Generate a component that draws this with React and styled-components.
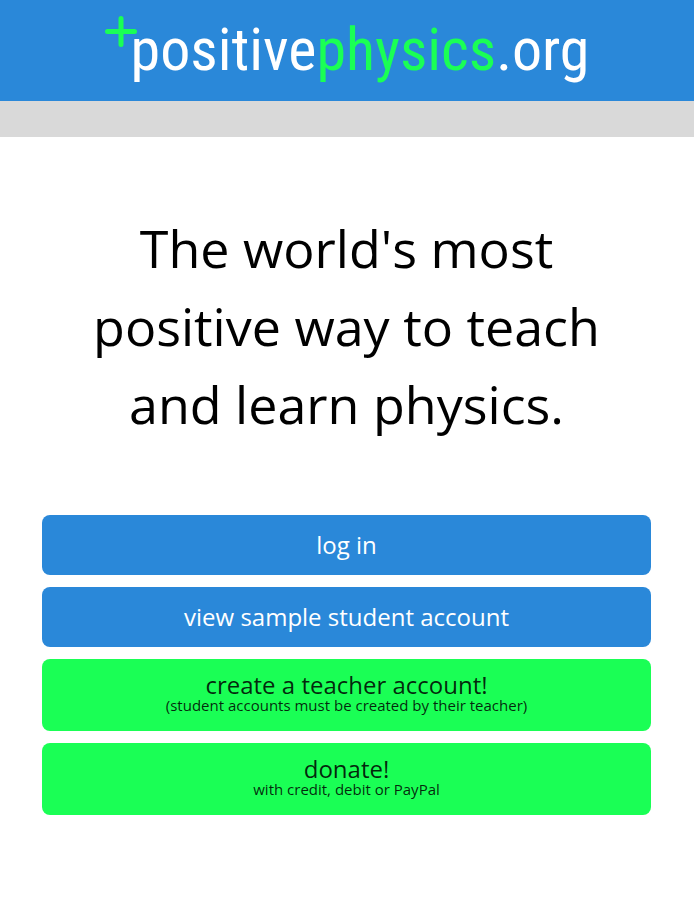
import React from "react";
import styled, { createGlobalStyle } from "styled-components";

const blue = "#2a88d9";
const green = "#1aff55";

const GlobalStyle = createGlobalStyle`
  *, *::before, *::after { box-sizing: border-box; }
  body {
    margin: 0;
    background: #fff;
    color: #000;
    font-family: "Open Sans", sans-serif;
  }
`;

const Header = styled.header`
  display: flex;
  justify-content: center;
  height: 101px;
  background: ${blue};
`;

const LogoLink = styled.a`
  display: flex;
  align-items: flex-start;
  padding-top: 16px;
  color: #fff;
  text-decoration: none;
`;

const Plus = styled.svg`
  flex: none;
  width: 32px;
  height: 32px;
  margin-right: -6px;
`;

const Wordmark = styled.span`
  font-family: "Roboto Condensed", "Roboto", sans-serif;
  font-size: 60px;
  font-weight: 400;
  line-height: 68px;
  white-space: nowrap;
`;

const Accent = styled.span`
  color: ${green};
`;

const Strip = styled.div`
  height: 36px;
  background: #d9d9d9;
`;

const Main = styled.main`
  padding: 72px 43px 84px 42px;
`;

const Headline = styled.h1`
  max-width: 560px;
  margin: 0 auto 72px;
  font-size: 52px;
  font-weight: 400;
  line-height: 78px;
  text-align: center;
`;

const Actions = styled.nav`
  display: flex;
  flex-direction: column;
  gap: 12px;
`;

const ActionButton = styled.button`
  display: flex;
  flex-direction: column;
  align-items: center;
  justify-content: center;
  width: 100%;
  min-height: 60px;
  padding: ${(p) => (p.$accent ? "14px 24px 18px" : "14px 24px")};
  border: 0;
  border-radius: 8px;
  background: ${(p) => (p.$accent ? green : blue)};
  color: ${(p) => (p.$accent ? "rgba(0, 0, 0, 0.85)" : "#fff")};
  font-family: inherit;
  font-size: 24px;
  font-weight: 400;
  line-height: 24px;
  cursor: pointer;
`;

const Note = styled.small`
  font-size: 15px;
  line-height: 16px;
`;

export default function App() {
  return (
    <>
      <GlobalStyle />
      <Header>
        <LogoLink href="/" aria-label="positivephysics.org">
          <Plus viewBox="0 0 32 32" aria-hidden="true">
            <path d="M16 2.500V28.500M2.500 15.500H29.500" stroke={green} strokeWidth="5" strokeLinecap="round" />
          </Plus>
          <Wordmark>
            positive<Accent>physics</Accent>.org
          </Wordmark>
        </LogoLink>
      </Header>
      <Strip />
      <Main>
        <Headline>The world's most positive way to teach and learn physics.</Headline>
        <Actions>
          <ActionButton type="button">log in</ActionButton>
          <ActionButton type="button">view sample student account</ActionButton>
          <ActionButton type="button" $accent>
            create a teacher account!
            <Note>(student accounts must be created by their teacher)</Note>
          </ActionButton>
          <ActionButton type="button" $accent>
            donate!
            <Note>with credit, debit or PayPal</Note>
          </ActionButton>
        </Actions>
      </Main>
    </>
  );
}
